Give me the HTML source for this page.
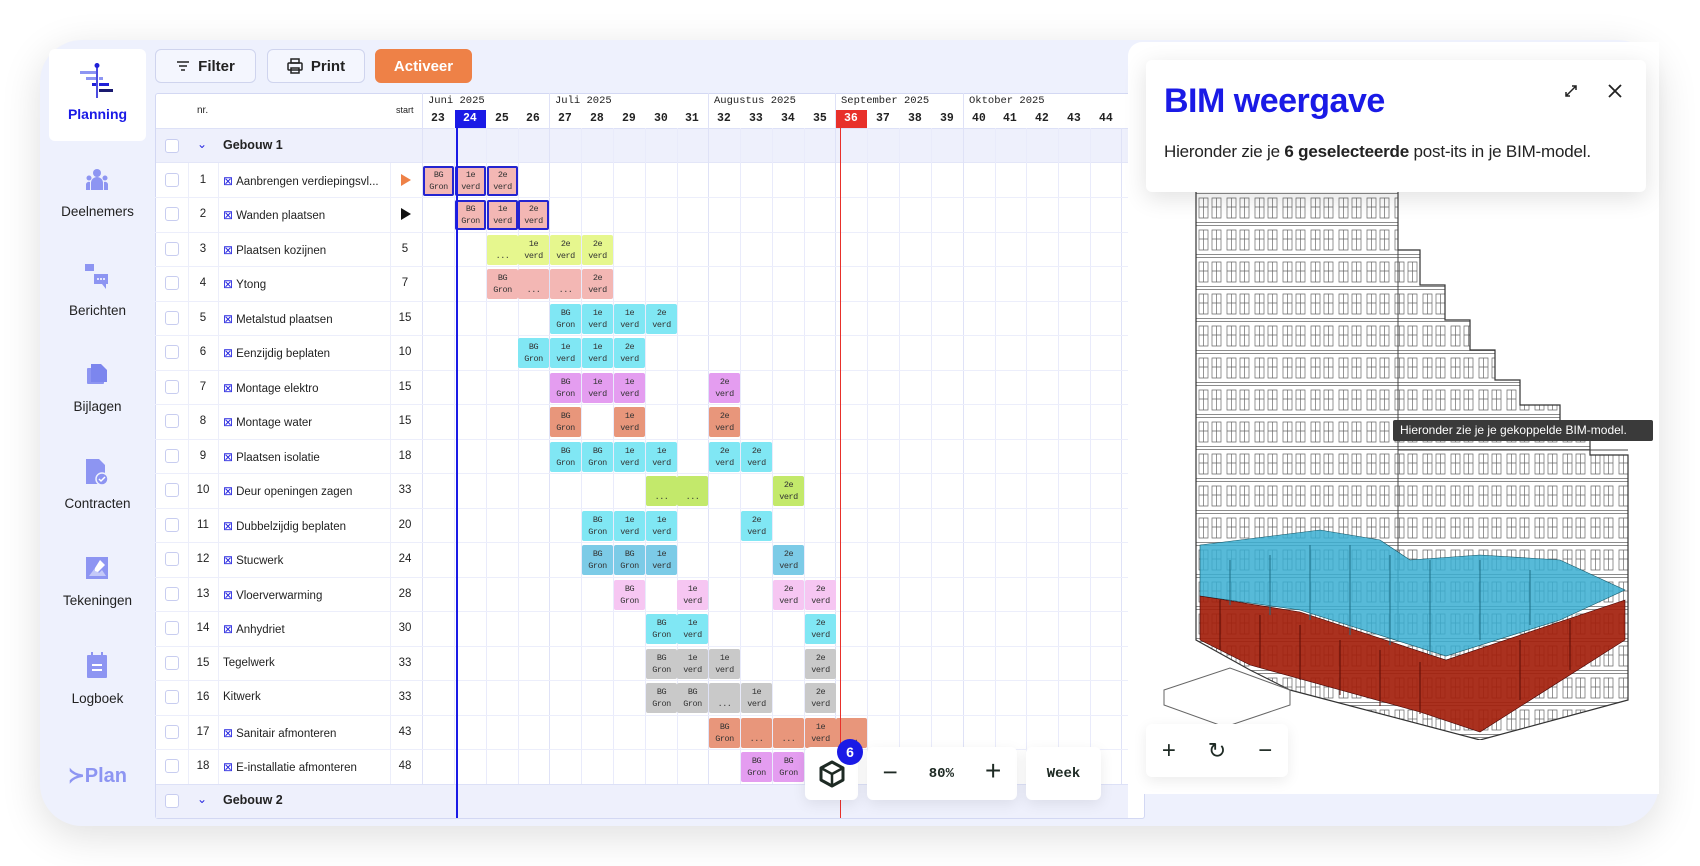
<!DOCTYPE html>
<html><head><meta charset="utf-8"><style>
*{box-sizing:border-box;margin:0;padding:0}
body{width:1700px;height:866px;background:#fff;position:relative;overflow:hidden;font-family:"Liberation Sans",sans-serif;color:#222}
.card{position:absolute;left:40px;top:40px;width:1619px;height:786px;background:#eef1fd;border-radius:42px;box-shadow:0 10px 40px rgba(0,0,0,.13);overflow:hidden}
.abs{position:absolute}
.side{position:absolute;left:49px;width:97px;text-align:center;font-size:13.5px;color:#222}
.btn{position:absolute;top:49px;height:34px;border:1px solid #cfd4ee;border-radius:6px;background:#f4f6fe;font-size:15px;font-weight:bold;display:flex;align-items:center;justify-content:center;gap:8px;color:#222}
.tbl{position:absolute;left:155px;top:93px;width:990px;height:726px;background:#fff;border:1px solid #d3d8f3;border-radius:3px;overflow:hidden}
.vl{position:absolute;top:128px;width:1px;height:656px;background:#e9ebfb}
.hl{position:absolute;left:155px;width:973px;height:1px;background:#eceefb}
.cb{position:absolute;left:165px;width:14px;height:14px;border:1.5px solid #c8cdf0;border-radius:3px;background:#fff}
.nr{position:absolute;left:190px;width:26px;text-align:center;font-size:11.5px}
.nm{position:absolute;left:223px;font-size:11.5px;white-space:nowrap}
.nm b{color:#2a2ae0;font-weight:normal;font-size:12px;margin-right:3px}
.st{position:absolute;left:390px;width:30px;text-align:center;font-size:11.5px}
.c{position:absolute;width:31px;height:30px;font-family:"Liberation Mono",monospace;font-size:8.5px;line-height:12px;text-align:center;padding-top:3px;color:#333;border-radius:2px;letter-spacing:-.5px}
.wk{position:absolute;top:112px;width:31.8px;text-align:center;font-family:"Liberation Mono",monospace;font-size:11.5px;font-weight:bold;color:#222}
.mo{position:absolute;top:95px;font-family:"Liberation Mono",monospace;font-size:10.5px;color:#222}
.pk{background:#f3b7b4}.bd{border:2px solid #2424d0;padding-top:1px}
.yl{background:#e6f78e}.cy{background:#80e7f4}.vi{background:#e49df0}.or{background:#e8967b}.gr{background:#c3e96b}.bl{background:#7ccbe7}.lp{background:#f6c6f2}.gy{background:#c9c9c9}
.ctl{position:absolute;background:#fff;border-radius:6px;box-shadow:0 4px 14px rgba(0,0,0,.08);display:flex;align-items:center;justify-content:center;font-family:"Liberation Mono",monospace;font-weight:bold;color:#1e2a24}
</style></head><body>
<div class="card"></div>

<div class="abs" style="left:49px;top:49px;width:97px;height:92px;background:#fff;border-radius:6px"></div>
<svg class="abs" style="left:78px;top:62px" width="38" height="38" viewBox="0 0 38 38">
<line x1="19" y1="3" x2="19" y2="36" stroke="#2020d8" stroke-width="1.6"/><circle cx="19" cy="3.5" r="2.5" fill="#2020d8"/>
<rect x="2" y="9" width="16" height="3" fill="#8d95f2"/><rect x="8" y="15" width="10" height="3" fill="#8d95f2"/><rect x="21" y="15" width="4" height="3" fill="#8d95f2"/>
<rect x="14" y="21" width="4" height="3" fill="#2020d8"/><rect x="21" y="21" width="10" height="3" fill="#2020d8"/><rect x="21" y="27" width="14" height="3" fill="#1a1a70"/></svg>
<div class="side" style="top:106px;color:#1a1ae6;font-weight:bold;font-size:14px">Planning</div>

<svg class="abs" style="left:85px;top:168px" width="24" height="24" viewBox="0 0 24 24" fill="#8d95f2"><circle cx="12" cy="5" r="4"/><circle cx="4" cy="10" r="2.5"/><circle cx="20" cy="10" r="2.5"/><path d="M6 22v-7a6 6 0 0 1 12 0v7z"/><path d="M1 22v-6a3 3 0 0 1 4-2v8zM23 22v-6a3 3 0 0 0-4-2v8z"/></svg>
<div class="side" style="top:204px">Deelnemers</div>
<svg class="abs" style="left:84px;top:263px" width="26" height="28" viewBox="0 0 26 28" fill="#8d95f2"><rect x="1" y="1" width="9" height="7"/><rect x="10" y="11" width="14" height="10"/><path d="M18 21l4 5v-5z"/><circle cx="14" cy="16" r="1" fill="#fff"/><circle cx="17" cy="16" r="1" fill="#fff"/><circle cx="20" cy="16" r="1" fill="#fff"/></svg>
<div class="side" style="top:303px">Berichten</div>
<svg class="abs" style="left:85px;top:362px" width="24" height="24" viewBox="0 0 24 24" fill="#8d95f2"><rect x="2" y="6" width="17" height="16" rx="1"/><path d="M6 2h10l6 6v12H6z" fill="#7c86ee"/></svg>
<div class="side" style="top:399px">Bijlagen</div>
<svg class="abs" style="left:85px;top:458px" width="24" height="28" viewBox="0 0 24 28" fill="#8d95f2"><path d="M1 1h13l6 6v19H1z"/><circle cx="17" cy="21" r="6" fill="#8d95f2" stroke="#eef1fd" stroke-width="1.5"/><path d="M14 21l2 2 4-4" stroke="#fff" stroke-width="1.5" fill="none"/></svg>
<div class="side" style="top:496px">Contracten</div>
<svg class="abs" style="left:85px;top:556px" width="24" height="24" viewBox="0 0 24 24" fill="#8d95f2"><rect x="1" y="1" width="22" height="22"/><path d="M4 20l6-8 4 5 3-3 4 6z" fill="#c4c9f8"/><path d="M15 4l5 5-7 7-3-1 0-3z" fill="#fff"/></svg>
<div class="side" style="top:593px">Tekeningen</div>
<svg class="abs" style="left:86px;top:651px" width="22" height="28" viewBox="0 0 22 28" fill="#8d95f2"><rect x="1" y="4" width="20" height="23" rx="1"/><rect x="5" y="1" width="2" height="5"/><rect x="15" y="1" width="2" height="5"/><rect x="6" y="13" width="10" height="2" fill="#fff"/><rect x="6" y="18" width="10" height="2" fill="#fff"/></svg>
<div class="side" style="top:691px">Logboek</div>
<div class="side" style="top:763px;font-size:20px;font-weight:bold;color:#8d95f2">&#8827;Plan</div>

<div class="btn" style="left:155px;width:101px"><svg width="14" height="12" viewBox="0 0 14 12"><path d="M1 2h12M3 6h8M5 10h4" stroke="#222" stroke-width="1.6"/></svg>Filter</div>
<div class="btn" style="left:267px;width:98px"><svg width="16" height="16" viewBox="0 0 16 16" fill="none" stroke="#222" stroke-width="1.5"><rect x="4" y="1" width="8" height="4"/><rect x="1" y="5" width="14" height="7" rx="1"/><rect x="4" y="10" width="8" height="5"/></svg>Print</div>
<div class="btn" style="left:375px;width:97px;background:#ee8147;border-color:#ee8147;color:#fff">Activeer</div>

<div class="tbl"></div>
<div class="abs" style="left:156px;top:128px;width:972px;height:35px;background:#eef0fc;border-top:1px solid #dde1f7;border-bottom:1px solid #e3e6f8"></div>
<div class="abs" style="left:156px;top:784px;width:972px;height:34px;background:#eef0fc;border-top:1px solid #dde1f7"></div>
<div class="vl" style="left:188px;top:163px;height:621px;background:#eceefa"></div>
<div class="vl" style="left:218px;top:163px;height:621px;background:#eceefa"></div>
<div class="vl" style="left:390px;top:163px;height:621px;background:#eceefa"></div>
<div class="vl" style="left:422px;top:93px;height:691px;background:#dfe2f7"></div>
<div class="vl" style="left:454px"></div><div class="vl" style="left:486px"></div><div class="vl" style="left:518px"></div>
<div class="vl" style="left:549px;top:93px;height:691px;background:#dfe2f7"></div>
<div class="vl" style="left:581px"></div><div class="vl" style="left:613px"></div><div class="vl" style="left:645px"></div><div class="vl" style="left:677px"></div>
<div class="vl" style="left:708px;top:93px;height:691px;background:#dfe2f7"></div>
<div class="vl" style="left:740px"></div><div class="vl" style="left:772px"></div><div class="vl" style="left:804px"></div>
<div class="vl" style="left:835px;top:93px;height:691px;background:#dfe2f7"></div>
<div class="vl" style="left:867px"></div><div class="vl" style="left:899px"></div><div class="vl" style="left:931px"></div>
<div class="vl" style="left:963px;top:93px;height:691px;background:#dfe2f7"></div>
<div class="vl" style="left:995px"></div><div class="vl" style="left:1026px"></div><div class="vl" style="left:1058px"></div><div class="vl" style="left:1090px"></div><div class="vl" style="left:1121px;background:#dfe2f7"></div>
<div class="hl" style="top:197px"></div><div class="hl" style="top:232px"></div><div class="hl" style="top:266px"></div><div class="hl" style="top:301px"></div><div class="hl" style="top:335px"></div><div class="hl" style="top:370px"></div><div class="hl" style="top:404px"></div><div class="hl" style="top:439px"></div><div class="hl" style="top:473px"></div><div class="hl" style="top:508px"></div><div class="hl" style="top:542px"></div><div class="hl" style="top:577px"></div><div class="hl" style="top:611px"></div><div class="hl" style="top:646px"></div><div class="hl" style="top:680px"></div><div class="hl" style="top:715px"></div><div class="hl" style="top:749px"></div>

<div class="abs" style="left:197px;top:105px;font-size:10px">nr.</div>
<div class="abs" style="left:396px;top:105px;font-size:9px">start</div>
<div class="mo" style="left:428px">Juni 2025</div><div class="mo" style="left:555px">Juli 2025</div><div class="mo" style="left:714px">Augustus 2025</div><div class="mo" style="left:841px">September 2025</div><div class="mo" style="left:969px">Oktober 2025</div>
<div class="abs" style="left:455px;top:110px;width:31px;height:18px;background:#1a1ae6"></div>
<div class="abs" style="left:836px;top:110px;width:31px;height:18px;background:#e8302a"></div>
<div class="wk" style="left:422px">23</div><div class="wk" style="left:454px;color:#fff">24</div><div class="wk" style="left:486px">25</div><div class="wk" style="left:517px">26</div><div class="wk" style="left:549px">27</div><div class="wk" style="left:581px">28</div><div class="wk" style="left:613px">29</div><div class="wk" style="left:645px">30</div><div class="wk" style="left:676px">31</div><div class="wk" style="left:708px">32</div><div class="wk" style="left:740px">33</div><div class="wk" style="left:772px">34</div><div class="wk" style="left:804px">35</div><div class="wk" style="left:835px;color:#fff">36</div><div class="wk" style="left:867px">37</div><div class="wk" style="left:899px">38</div><div class="wk" style="left:931px">39</div><div class="wk" style="left:963px">40</div><div class="wk" style="left:994px">41</div><div class="wk" style="left:1026px">42</div><div class="wk" style="left:1058px">43</div><div class="wk" style="left:1090px">44</div>

<div class="cb" style="top:139px"></div>
<div class="abs" style="left:197px;top:137px;font-size:12px;color:#2a2ae0">&#8964;</div>
<div class="abs" style="left:223px;top:138px;font-size:12.5px;font-weight:bold">Gebouw 1</div>
<div class="cb" style="top:794px"></div>
<div class="abs" style="left:197px;top:792px;font-size:12px;color:#2a2ae0">&#8964;</div>
<div class="abs" style="left:223px;top:793px;font-size:12.5px;font-weight:bold">Gebouw 2</div>

<div class="cb" style="top:173px"></div><div class="nr" style="top:174px">1</div><div class="nm" style="top:174px"><b>&#8864;</b>Aanbrengen verdiepingsvl...</div><svg class="abs" style="left:401px;top:174px" width="10" height="12"><path d="M0 0l10 6-10 6z" fill="#ee8147"/></svg>
<div class="cb" style="top:207px"></div><div class="nr" style="top:208px">2</div><div class="nm" style="top:208px"><b>&#8864;</b>Wanden plaatsen</div><svg class="abs" style="left:401px;top:208px" width="10" height="12"><path d="M0 0l10 6-10 6z" fill="#111"/></svg>
<div class="cb" style="top:242px"></div><div class="nr" style="top:243px">3</div><div class="nm" style="top:243px"><b>&#8864;</b>Plaatsen kozijnen</div><div class="st" style="top:243px">5</div>
<div class="cb" style="top:276px"></div><div class="nr" style="top:277px">4</div><div class="nm" style="top:277px"><b>&#8864;</b>Ytong</div><div class="st" style="top:277px">7</div>
<div class="cb" style="top:311px"></div><div class="nr" style="top:312px">5</div><div class="nm" style="top:312px"><b>&#8864;</b>Metalstud plaatsen</div><div class="st" style="top:312px">15</div>
<div class="cb" style="top:345px"></div><div class="nr" style="top:346px">6</div><div class="nm" style="top:346px"><b>&#8864;</b>Eenzijdig beplaten</div><div class="st" style="top:346px">10</div>
<div class="cb" style="top:380px"></div><div class="nr" style="top:381px">7</div><div class="nm" style="top:381px"><b>&#8864;</b>Montage elektro</div><div class="st" style="top:381px">15</div>
<div class="cb" style="top:414px"></div><div class="nr" style="top:415px">8</div><div class="nm" style="top:415px"><b>&#8864;</b>Montage water</div><div class="st" style="top:415px">15</div>
<div class="cb" style="top:449px"></div><div class="nr" style="top:450px">9</div><div class="nm" style="top:450px"><b>&#8864;</b>Plaatsen isolatie</div><div class="st" style="top:450px">18</div>
<div class="cb" style="top:483px"></div><div class="nr" style="top:484px">10</div><div class="nm" style="top:484px"><b>&#8864;</b>Deur openingen zagen</div><div class="st" style="top:484px">33</div>
<div class="cb" style="top:518px"></div><div class="nr" style="top:519px">11</div><div class="nm" style="top:519px"><b>&#8864;</b>Dubbelzijdig beplaten</div><div class="st" style="top:519px">20</div>
<div class="cb" style="top:552px"></div><div class="nr" style="top:553px">12</div><div class="nm" style="top:553px"><b>&#8864;</b>Stucwerk</div><div class="st" style="top:553px">24</div>
<div class="cb" style="top:587px"></div><div class="nr" style="top:588px">13</div><div class="nm" style="top:588px"><b>&#8864;</b>Vloerverwarming</div><div class="st" style="top:588px">28</div>
<div class="cb" style="top:621px"></div><div class="nr" style="top:622px">14</div><div class="nm" style="top:622px"><b>&#8864;</b>Anhydriet</div><div class="st" style="top:622px">30</div>
<div class="cb" style="top:656px"></div><div class="nr" style="top:657px">15</div><div class="nm" style="top:657px">Tegelwerk</div><div class="st" style="top:657px">33</div>
<div class="cb" style="top:690px"></div><div class="nr" style="top:691px">16</div><div class="nm" style="top:691px">Kitwerk</div><div class="st" style="top:691px">33</div>
<div class="cb" style="top:725px"></div><div class="nr" style="top:726px">17</div><div class="nm" style="top:726px"><b>&#8864;</b>Sanitair afmonteren</div><div class="st" style="top:726px">43</div>
<div class="cb" style="top:759px"></div><div class="nr" style="top:760px">18</div><div class="nm" style="top:760px"><b>&#8864;</b>E-installatie afmonteren</div><div class="st" style="top:760px">48</div>

<div class="c pk bd" style="left:423px;top:166px">BG<br>Gron</div><div class="c pk bd" style="left:455px;top:166px">1e<br>verd</div><div class="c pk bd" style="left:487px;top:166px">2e<br>verd</div>
<div class="c pk bd" style="left:455px;top:200px">BG<br>Gron</div><div class="c pk bd" style="left:487px;top:200px">1e<br>verd</div><div class="c pk bd" style="left:518px;top:200px">2e<br>verd</div>
<div class="c yl" style="left:487px;top:235px"><br>...</div><div class="c yl" style="left:518px;top:235px">1e<br>verd</div><div class="c yl" style="left:550px;top:235px">2e<br>verd</div><div class="c yl" style="left:582px;top:235px">2e<br>verd</div>
<div class="c pk" style="left:487px;top:269px">BG<br>Gron</div><div class="c pk" style="left:518px;top:269px"><br>...</div><div class="c pk" style="left:550px;top:269px"><br>...</div><div class="c pk" style="left:582px;top:269px">2e<br>verd</div>
<div class="c cy" style="left:550px;top:304px">BG<br>Gron</div><div class="c cy" style="left:582px;top:304px">1e<br>verd</div><div class="c cy" style="left:614px;top:304px">1e<br>verd</div><div class="c cy" style="left:646px;top:304px">2e<br>verd</div>
<div class="c cy" style="left:518px;top:338px">BG<br>Gron</div><div class="c cy" style="left:550px;top:338px">1e<br>verd</div><div class="c cy" style="left:582px;top:338px">1e<br>verd</div><div class="c cy" style="left:614px;top:338px">2e<br>verd</div>
<div class="c vi" style="left:550px;top:373px">BG<br>Gron</div><div class="c vi" style="left:582px;top:373px">1e<br>verd</div><div class="c vi" style="left:614px;top:373px">1e<br>verd</div><div class="c vi" style="left:709px;top:373px">2e<br>verd</div>
<div class="c or" style="left:550px;top:407px">BG<br>Gron</div><div class="c or" style="left:614px;top:407px">1e<br>verd</div><div class="c or" style="left:709px;top:407px">2e<br>verd</div>
<div class="c cy" style="left:550px;top:442px">BG<br>Gron</div><div class="c cy" style="left:582px;top:442px">BG<br>Gron</div><div class="c cy" style="left:614px;top:442px">1e<br>verd</div><div class="c cy" style="left:646px;top:442px">1e<br>verd</div><div class="c cy" style="left:709px;top:442px">2e<br>verd</div><div class="c cy" style="left:741px;top:442px">2e<br>verd</div>
<div class="c gr" style="left:646px;top:476px"><br>...</div><div class="c gr" style="left:677px;top:476px"><br>...</div><div class="c gr" style="left:773px;top:476px">2e<br>verd</div>
<div class="c cy" style="left:582px;top:511px">BG<br>Gron</div><div class="c cy" style="left:614px;top:511px">1e<br>verd</div><div class="c cy" style="left:646px;top:511px">1e<br>verd</div><div class="c cy" style="left:741px;top:511px">2e<br>verd</div>
<div class="c bl" style="left:582px;top:545px">BG<br>Gron</div><div class="c bl" style="left:614px;top:545px">BG<br>Gron</div><div class="c bl" style="left:646px;top:545px">1e<br>verd</div><div class="c bl" style="left:773px;top:545px">2e<br>verd</div>
<div class="c lp" style="left:614px;top:580px">BG<br>Gron</div><div class="c lp" style="left:677px;top:580px">1e<br>verd</div><div class="c lp" style="left:773px;top:580px">2e<br>verd</div><div class="c lp" style="left:805px;top:580px">2e<br>verd</div>
<div class="c cy" style="left:646px;top:614px">BG<br>Gron</div><div class="c cy" style="left:677px;top:614px">1e<br>verd</div><div class="c cy" style="left:805px;top:614px">2e<br>verd</div>
<div class="c gy" style="left:646px;top:649px">BG<br>Gron</div><div class="c gy" style="left:677px;top:649px">1e<br>verd</div><div class="c gy" style="left:709px;top:649px">1e<br>verd</div><div class="c gy" style="left:805px;top:649px">2e<br>verd</div>
<div class="c gy" style="left:646px;top:683px">BG<br>Gron</div><div class="c gy" style="left:677px;top:683px">BG<br>Gron</div><div class="c gy" style="left:709px;top:683px"><br>...</div><div class="c gy" style="left:741px;top:683px">1e<br>verd</div><div class="c gy" style="left:805px;top:683px">2e<br>verd</div>
<div class="c or" style="left:709px;top:718px">BG<br>Gron</div><div class="c or" style="left:741px;top:718px"><br>...</div><div class="c or" style="left:773px;top:718px"><br>...</div><div class="c or" style="left:805px;top:718px">1e<br>verd</div><div class="c or" style="left:836px;top:718px"><br>...</div>
<div class="c vi" style="left:741px;top:752px">BG<br>Gron</div><div class="c vi" style="left:773px;top:752px">BG<br>Gron</div>

<div class="abs" style="left:456px;top:128px;width:2px;height:690px;background:#1a1ae6"></div>
<div class="abs" style="left:840px;top:128px;width:1px;height:690px;background:#e8302a"></div>

<div class="ctl" style="left:805px;top:747px;width:53px;height:53px"><svg width="26" height="28" viewBox="0 0 26 28" fill="none" stroke="#1e2a24" stroke-width="3" stroke-linejoin="round"><path d="M13 2l11 6v12l-11 6-11-6V8z"/><path d="M2 8l11 6 11-6M13 14v12" stroke-width="2.5"/></svg></div>
<div class="abs" style="left:837px;top:739px;width:26px;height:26px;border-radius:50%;background:#1a1ae6;color:#fff;font-weight:bold;font-size:14px;text-align:center;line-height:26px">6</div>
<div class="ctl" style="left:867px;top:747px;width:150px;height:53px;font-size:14px;justify-content:space-around"><span style="font-size:26px;font-weight:normal">&#8722;</span><span>80%</span><span style="font-size:28px;font-weight:normal">+</span></div>
<div class="ctl" style="left:1026px;top:747px;width:75px;height:53px;font-size:14px">Week</div>

<div class="abs" style="left:1128px;top:42px;width:531px;height:752px;background:#fff;border-radius:14px 0 0 10px"></div>
<svg class="abs" style="left:1150px;top:180px" width="500" height="560" viewBox="1150 180 500 560">
<defs><pattern id="w" x="1196" y="190" width="28" height="32" patternUnits="userSpaceOnUse"><rect width="28" height="32" fill="#fff"/><path d="M0 .5H28M0 3.5H28M3 8v20h9V8zM16 8v20h9V8zM7.5 8v20M20.5 8v20M3 17h9M16 17h9" stroke="#666" stroke-width=".7" fill="none"/></pattern></defs>
<path d="M1196 190H1398V250H1420V285H1445V320H1470V350H1495V380H1520V405H1560V430H1590V455H1628V700L1480 740 1290 690 1250 670 1196 640Z" fill="url(#w)" stroke="#333" stroke-width="1.2"/>
<path d="M1398 190V640M1398 450H1628" stroke="#444" stroke-width="1"/>
<path d="M1164 690L1230 668 1290 690 1290 705 1225 727 1164 705Z" fill="none" stroke="#666" stroke-width="1"/>
<path d="M1200 545L1320 530 1380 540 1410 560 1480 555 1560 560 1625 590 1560 620 1446 656 1300 610 1200 596Z" fill="#3aaed1" fill-opacity=".85" stroke="#156" stroke-width=".6"/>
<path d="M1200 596L1300 612 1446 660 1625 600 1625 640 1480 732 1420 712 1250 665 1200 640Z" fill="#a31f0c" fill-opacity=".92" stroke="#400" stroke-width=".6"/>
<path d="M1220 600V650M1260 615V668M1300 625V680M1340 640V695M1380 650V706M1420 662V714M1520 640V700M1570 620V670" stroke="#5a0c04" stroke-width="1"/>
<path d="M1230 560V605M1270 555V615M1310 545V620M1350 545V635M1390 555V645M1430 560V655M1480 560V640M1530 570V625" stroke="#1c6d86" stroke-width="1"/>
</svg>
<div class="abs" style="left:1146px;top:60px;width:500px;height:132px;background:#fff;border-radius:6px;box-shadow:0 6px 24px rgba(0,0,0,.12)"></div>
<div class="abs" style="left:1164px;top:82px;font-size:34px;font-weight:bold;color:#1a1ae6;letter-spacing:-.5px">BIM weergave</div>
<div class="abs" style="left:1164px;top:142px;font-size:17px;color:#222;letter-spacing:-.2px">Hieronder zie je <b>6 geselecteerde</b> post-its in je BIM-model.</div>
<svg class="abs" style="left:1563px;top:83px" width="16" height="16" viewBox="0 0 16 16" stroke="#222" stroke-width="1.5" fill="none"><path d="M3 13L13 3M9 3h4v4M3 9v4h4"/></svg>
<svg class="abs" style="left:1607px;top:83px" width="16" height="16" viewBox="0 0 16 16" stroke="#222" stroke-width="1.8"><path d="M2 2l12 12M14 2L2 14"/></svg>
<div class="abs" style="left:1393px;top:420px;width:260px;height:21px;background:#3a3a3a;color:#fff;font-size:12px;line-height:21px;padding-left:7px;border-radius:2px">Hieronder zie je je gekoppelde BIM-model.</div>
<div class="ctl" style="left:1146px;top:724px;width:142px;height:53px;justify-content:space-around;font-family:'Liberation Sans',sans-serif;font-weight:normal;font-size:24px"><span>+</span><span style="font-size:22px">&#8635;</span><span>&#8722;</span></div>
</body></html>
